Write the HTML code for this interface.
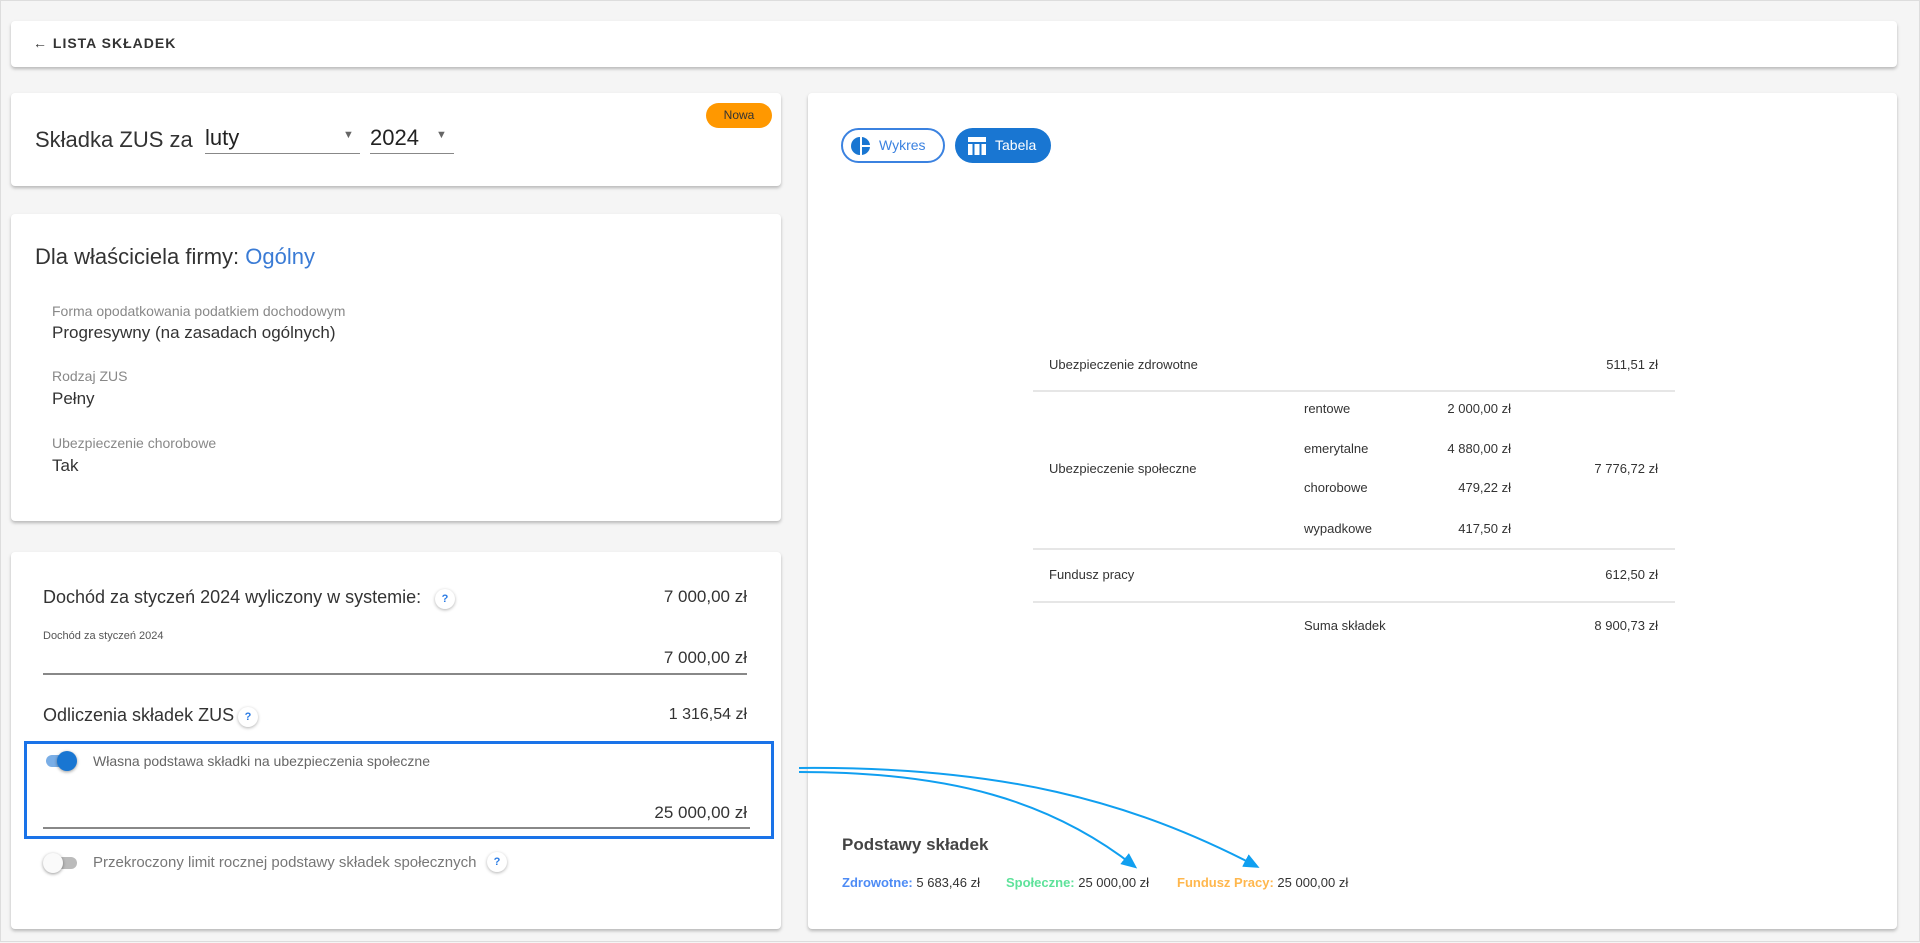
<!DOCTYPE html>
<html><head><meta charset="utf-8"><style>
*{box-sizing:border-box;margin:0;padding:0}
body{width:1920px;height:942px;background:#f5f5f5;font-family:"Liberation Sans",sans-serif;color:#333;position:relative;overflow:hidden;border:1px solid #ddd}
.card{position:absolute;background:#fff;border-radius:4px;box-shadow:0 2px 3px rgba(0,0,0,.25)}
.a{position:absolute;white-space:nowrap}
.lbl{font-size:14px;color:#888}
.val{font-size:17px;color:#333}
.q{position:absolute;width:20px;height:20px;border-radius:50%;background:#fff;box-shadow:0 1px 3px rgba(0,0,0,.3);color:#2a7be4;font-size:11px;font-weight:bold;text-align:center;line-height:20px}
.line{position:absolute;height:1px;background:#999}
.t{position:absolute;font-size:13px;color:#333;white-space:nowrap}
.hr{position:absolute;left:1032px;width:642px;height:2px;background:#e6e6e6}
</style></head><body>
<div class="card" style="left:10px;top:20px;width:1886px;height:46px">
<div class="a" style="left:22px;top:14px;font-size:14px;font-weight:bold;letter-spacing:1px;color:#333">&#8592; LISTA SKŁADEK</div>
</div>

<div class="card" style="left:10px;top:92px;width:770px;height:93px">
<div class="a" style="left:24px;top:34px;font-size:22px;color:#333">Składka ZUS za</div>
<div class="a" style="left:194px;top:32px;font-size:22px;color:#222">luty</div>
<div class="line" style="left:194px;top:60px;width:155px;background:#888"></div>
<div class="a" style="left:332px;top:36px;font-size:11px;color:#666">&#9660;</div>
<div class="a" style="left:359px;top:32px;font-size:22px;color:#222">2024</div>
<div class="line" style="left:359px;top:60px;width:84px;background:#888"></div>
<div class="a" style="left:425px;top:36px;font-size:11px;color:#666">&#9660;</div>
<div class="a" style="left:695px;top:10px;width:66px;height:25px;border-radius:13px;background:#ff9800;color:#333;font-size:12px;text-align:center;line-height:25px">Nowa</div>
</div>

<div class="card" style="left:10px;top:213px;width:770px;height:307px">
<div class="a" style="left:24px;top:30px;font-size:22px;color:#333">Dla właściciela firmy: <span style="color:#3a7bd5">Ogólny</span></div>
<div class="a lbl" style="left:41px;top:89px">Forma opodatkowania podatkiem dochodowym</div>
<div class="a val" style="left:41px;top:109px">Progresywny (na zasadach ogólnych)</div>
<div class="a lbl" style="left:41px;top:154px">Rodzaj ZUS</div>
<div class="a val" style="left:41px;top:175px">Pełny</div>
<div class="a lbl" style="left:41px;top:221px">Ubezpieczenie chorobowe</div>
<div class="a val" style="left:41px;top:242px">Tak</div>
</div>

<div class="card" style="left:10px;top:551px;width:770px;height:377px">
<div class="a" style="left:32px;top:35px;font-size:18px;color:#333">Dochód za styczeń 2024 wyliczony w systemie:</div>
<div class="q" style="left:424px;top:37px">?</div>
<div class="a" style="right:34px;top:35px;font-size:17px">7 000,00 zł</div>
<div class="a" style="left:32px;top:78px;font-size:11px;color:#555">Dochód za styczeń 2024</div>
<div class="a" style="right:34px;top:96px;font-size:17px">7 000,00 zł</div>
<div class="line" style="left:32px;top:121px;width:704px;background:#888;height:2px"></div>
<div class="a" style="left:32px;top:153px;font-size:18px;color:#333">Odliczenia składek ZUS</div>
<div class="q" style="left:227px;top:155px">?</div>
<div class="a" style="right:34px;top:154px;font-size:16px">1 316,54 zł</div>
<div class="q" style="left:476px;top:300px">?</div>
<div style="position:absolute;left:38px;top:305px;width:28px;height:12px;border-radius:6px;background:#bbb"></div>
<div style="position:absolute;left:32px;top:301px;width:20px;height:20px;border-radius:50%;background:#fafafa;box-shadow:0 1px 3px rgba(0,0,0,.4)"></div>
<div class="a" style="left:82px;top:302px;font-size:15px;color:#777">Przekroczony limit rocznej podstawy składek społecznych</div>
</div>

<div style="position:absolute;left:23px;top:740px;width:750px;height:98px;border:3px solid #1a73e8;background:#fff">
<div style="position:absolute;left:19px;top:11px;width:28px;height:12px;border-radius:6px;background:#7aaee6"></div>
<div style="position:absolute;left:30px;top:7px;width:20px;height:20px;border-radius:50%;background:#1976d2;box-shadow:0 1px 3px rgba(0,0,0,.4)"></div>
<div class="a" style="left:66px;top:9px;font-size:14px;color:#666">Własna podstawa składki na ubezpieczenia społeczne</div>
<div class="a" style="right:24px;top:59px;font-size:17px">25 000,00 zł</div>
<div class="line" style="left:16px;top:83px;width:707px;background:#888;height:2px"></div>
</div>

<div class="card" style="left:807px;top:92px;width:1089px;height:836px">
<div class="a" style="left:33px;top:35px;width:104px;height:35px;border:2px solid #3b82e0;border-radius:18px;color:#3b82e0;font-size:14px;line-height:31px;padding-left:36px">Wykres
<svg style="position:absolute;left:8px;top:6px" width="20" height="20" viewBox="0 0 20 20"><path d="M9 1A9 9 0 0 0 9 19Z" fill="#1976d2"/><path d="M11 1A9 9 0 0 1 19 9H11Z" fill="#1976d2"/><path d="M11 11H19A9 9 0 0 1 11 19Z" fill="#1976d2"/></svg></div>
<div class="a" style="left:147px;top:35px;width:96px;height:35px;background:#1976d2;border-radius:18px;color:#fff;font-size:14px;line-height:35px;padding-left:40px">Tabela
<svg style="position:absolute;left:12px;top:8px" width="20" height="20" viewBox="0 0 20 20"><rect x="1" y="1" width="18" height="5" fill="#fff"/><rect x="1" y="8" width="4.5" height="11" fill="#fff"/><rect x="7.5" y="8" width="5" height="11" fill="#fff"/><rect x="14.5" y="8" width="4.5" height="11" fill="#fff"/></svg></div>
<div class="a" style="left:34px;top:742px;font-size:17px;font-weight:bold;color:#444">Podstawy składek</div>
<div class="a" style="left:34px;top:782px;font-size:13px;color:#333"><b style="color:#4d8bf5">Zdrowotne:</b> 5 683,46 zł</div>
<div class="a" style="left:198px;top:782px;font-size:13px;color:#333"><b style="color:#5ee29a">Społeczne:</b> 25 000,00 zł</div>
<div class="a" style="left:369px;top:782px;font-size:13px;color:#333"><b style="color:#ffb74d">Fundusz Pracy:</b> 25 000,00 zł</div>
</div>

<div class="t" style="left:1048px;top:356px">Ubezpieczenie zdrowotne</div>
<div class="t" style="left:1048px;top:356px;width:609px;text-align:right">511,51 zł</div>
<div class="hr" style="top:389px"></div>
<div class="t" style="left:1303px;top:400px">rentowe</div><div class="t" style="left:1303px;top:400px;width:207px;text-align:right">2 000,00 zł</div>
<div class="t" style="left:1303px;top:440px">emerytalne</div><div class="t" style="left:1303px;top:440px;width:207px;text-align:right">4 880,00 zł</div>
<div class="t" style="left:1303px;top:479px">chorobowe</div><div class="t" style="left:1303px;top:479px;width:207px;text-align:right">479,22 zł</div>
<div class="t" style="left:1303px;top:520px">wypadkowe</div><div class="t" style="left:1303px;top:520px;width:207px;text-align:right">417,50 zł</div>
<div class="t" style="left:1048px;top:460px">Ubezpieczenie społeczne</div>
<div class="t" style="left:1048px;top:460px;width:609px;text-align:right">7 776,72 zł</div>
<div class="hr" style="top:547px"></div>
<div class="t" style="left:1048px;top:566px">Fundusz pracy</div>
<div class="t" style="left:1048px;top:566px;width:609px;text-align:right">612,50 zł</div>
<div class="hr" style="top:600px"></div>
<div class="t" style="left:1303px;top:617px">Suma składek</div>
<div class="t" style="left:1048px;top:617px;width:609px;text-align:right">8 900,73 zł</div>

<svg style="position:absolute;left:0;top:0" width="1920" height="942">
<defs><marker id="m" markerWidth="16" markerHeight="14" refX="12" refY="7" orient="auto" markerUnits="userSpaceOnUse" viewBox="0 0 16 14"><path d="M0 0L16 7L0 14Z" fill="#109ff0"/></marker></defs>
<path d="M798 771C950 771 1050 800 1133 865" stroke="#109ff0" stroke-width="2" fill="none" marker-end="url(#m)"/>
<path d="M798 767C1000 765 1130 800 1255 865" stroke="#109ff0" stroke-width="2" fill="none" marker-end="url(#m)"/>
</svg>
</body></html>
